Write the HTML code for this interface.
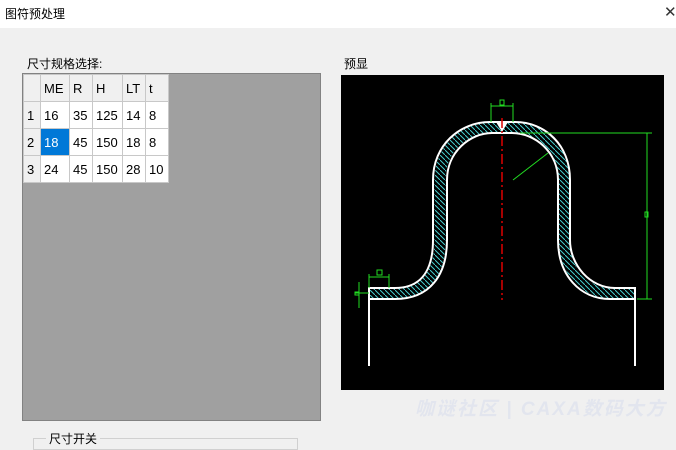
<!DOCTYPE html>
<html><head><meta charset="utf-8"><style>
body{margin:0;width:676px;height:439px;overflow:hidden;background:#f0f0f0;font-family:"Liberation Sans","Noto Sans CJK SC",sans-serif;font-size:12px;color:#000;position:relative}
.title{position:absolute;left:0;top:0;width:676px;height:28px;background:#fff}
.abs{position:absolute}
.grid{position:absolute;left:22px;top:73px;width:297px;height:346px;background:#a0a0a0;border:1px solid #828282}
table{border-collapse:collapse;position:absolute;left:0;top:0;font-size:13px}
td{border:1px solid #c8c8c8;height:27px;padding:0 0 0 3px;background:#fff;box-sizing:border-box}
td.h{background:#f0f0f0}
</style></head><body>
<div class="title"></div>
<div class="abs" style="left:5px;top:5px;font-size:12px">图符预处理</div>
<div class="abs" style="left:664px;top:3px;font-size:15px;color:#333">✕</div>
<div class="abs" style="left:27px;top:55px">尺寸规格选择:</div>
<div class="abs" style="left:344px;top:55px">预显</div>
<div class="grid"><table>
<tr><td class="h" style="width:17px"></td><td class="h" style="width:29px">ME</td><td class="h" style="width:23px">R</td><td class="h" style="width:30px">H</td><td class="h" style="width:23px">LT</td><td class="h" style="width:23px">t</td></tr>
<tr><td class="h">1</td><td>16</td><td>35</td><td>125</td><td>14</td><td>8</td></tr>
<tr><td class="h">2</td><td style="background:#0078d7;color:#fff">18</td><td>45</td><td>150</td><td>18</td><td>8</td></tr>
<tr><td class="h">3</td><td>24</td><td>45</td><td>150</td><td>28</td><td>10</td></tr>
</table></div>
<svg class="abs" style="left:0;top:0" width="676" height="439">
<defs><pattern id="hp" width="5" height="5" patternUnits="userSpaceOnUse"><path d="M0,0 L5,5" stroke="#4cc" stroke-width="1"/></pattern></defs>
<rect x="341" y="75" width="323" height="315" fill="#000"/>
<path d="M369,293.5 L395,293.5 C428,293.5 440,270 440,240 L440,180 C440,148 465,127.5 491,127.5 L513,127.5 C540,127.5 564,148 564,180 L564,240 C564,270 585,293.5 612,293.5 L635,293.5" fill="none" stroke="url(#hp)" stroke-width="11"/>
<g fill="none" stroke="#fff" stroke-width="2">
<path d="M369,366 L369,288 L395,288 C425,288 433,265 433,240 L433,180 C433,145 460,122 490,122 L515,122 C545,122 570,145 570,180 L570,240 C570,265 590,288 615,288 L635,288 L635,366"/>
<path d="M369,299 L395,299 C430,299 447,275 447,240 L447,180 C447,152 470,133 492,133 L512,133 C535,133 558,152 558,180 L558,240 C558,275 580,299 610,299 L635,299"/>
</g>
<path d="M496,122 L502,132 L508,122Z" fill="#fff"/>
<line x1="502" y1="118" x2="502" y2="300" stroke="#d00" stroke-width="1.5" stroke-dasharray="10,3,2,3"/>
<g stroke="#2d2" fill="none" stroke-width="1">
<path d="M491,122 V103 M513,122 V103 M491,106 H513"/><rect x="500" y="100" width="4" height="5"/>
<path d="M520,133 H652 M637,299 H652 M647,133 V299"/><rect x="645" y="212" width="3" height="5"/>
<path d="M513,180 L548,153"/>
<path d="M369,288 V274 M389,288 V274 M369,277 H389"/><rect x="377" y="270" width="5" height="5"/>
<path d="M359,282 V308 M355,293 H369"/><rect x="355" y="292" width="4" height="3"/>
</g>
</svg>
<div class="abs" style="left:415px;top:394px;font-size:19px;font-weight:bold;font-style:italic;color:#e2e5ee;letter-spacing:2px;white-space:nowrap">咖谜社区 | CAXA数码大方</div>
<div class="abs" style="left:33px;top:438px;width:263px;height:10px;border:1px solid #d0d0d0"></div>
<div class="abs" style="left:46px;top:430px;background:#f0f0f0;padding:0 3px">尺寸开关</div>
</body></html>
